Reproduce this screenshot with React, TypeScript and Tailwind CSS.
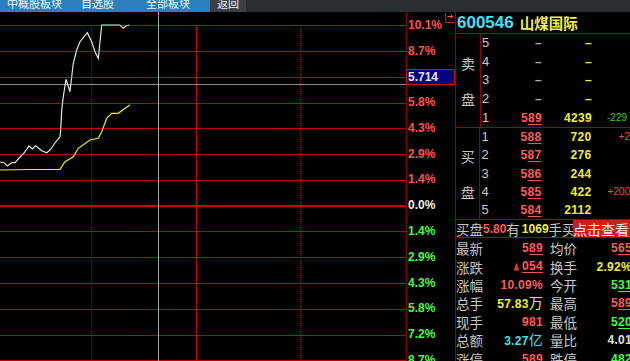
import React from 'react';

const num = "font-['Liberation_Sans',Arial,sans-serif]";
const cjk = "font-['Noto_Sans_CJK_SC',sans-serif]";

const gridY = [25, 51, 77, 103, 128, 154, 180, 231, 257, 283, 309, 335, 360];

const axisLabels = [
  { t: '10.1%', c: 'text-[#ff5050]' },
  { t: '8.7%', c: 'text-[#ff5050]' },
  { t: '7.2%', c: 'text-[#ff5050]' },
  { t: '5.8%', c: 'text-[#ff5050]' },
  { t: '4.3%', c: 'text-[#ff5050]' },
  { t: '2.9%', c: 'text-[#ff5050]' },
  { t: '1.4%', c: 'text-[#ff5050]' },
  { t: '0.0%', c: 'text-[#f0f0f0]' },
  { t: '1.4%', c: 'text-[#40ff40]' },
  { t: '2.9%', c: 'text-[#40ff40]' },
  { t: '4.3%', c: 'text-[#40ff40]' },
  { t: '5.8%', c: 'text-[#40ff40]' },
  { t: '7.2%', c: 'text-[#40ff40]' },
  { t: '8.7%', c: 'text-[#40ff40]' },
];

// price line and average line, page coordinates
const priceLine =
  '0,162 4,162.7 7.3,166 11.7,162.7 15,162.7 20,157 24,153 29,146 32.3,149 35.7,145.7 41.7,150.7 46.7,152.7 50,150 55,143 60,136.7 60.7,130 61.7,110 63.3,96.7 66,79.3 70,91.7 71.7,76.7 73.3,63.3 76.7,50 80,41.7 87.3,32.7 91.7,41.7 95,51.7 98.3,58.3 101.7,25 120,25 123.3,28.3 126,26 129.3,25';
const avgLine =
  '0,170 30,169.5 60,169.3 65,161.7 73.3,156.7 78.3,148.3 90,140 98.3,138.3 101.7,131.7 106.7,118.3 111.7,113.3 118.3,113.3 125,108.3 130,105';

type BookRow = { n: number; price?: string; vol?: string; chg?: string; chgCls?: string };

const sell: BookRow[] = [
  { n: 5 },
  { n: 4 },
  { n: 3 },
  { n: 2 },
  { n: 1, price: '589', vol: '4239', chg: '-229', chgCls: 'pl-[15px] text-[#30d030]' },
];

const buy: BookRow[] = [
  { n: 1, price: '588', vol: '720', chg: '+2', chgCls: 'pl-[27px] text-[#ff4040]' },
  { n: 2, price: '587', vol: '276' },
  { n: 3, price: '586', vol: '244' },
  { n: 4, price: '585', vol: '422', chg: '+200', chgCls: 'pl-[16px] text-[#ff4040]' },
  { n: 5, price: '584', vol: '2112' },
];

const Price = ({ v, color = 'decoration-[#ff5050]' }: { v: string; color?: string }) => (
  <span>
    {v.slice(0, v.length - 2)}
    <span className={`underline underline-offset-2 ${color}`}>{v.slice(-2)}</span>
  </span>
);

const Book = ({ side, rows, h }: { side: [string, string]; rows: BookRow[]; h: string }) => (
  <div className={`flex ${h} shrink-0 border-b border-[#9a0000]`}>
    <div className={`flex w-[25px] flex-col items-center justify-center gap-[18px] border-r border-[#9a0000] text-[14px] leading-[18px] text-[#c8c8c8] ${cjk}`}>
      <span>{side[0]}</span>
      <span>{side[1]}</span>
    </div>
    <div className="flex flex-1 flex-col">
      {rows.map((r) => (
        <div key={r.n} className={`flex min-h-0 flex-1 items-center whitespace-nowrap leading-[14px] ${num}`}>
          <span className="w-[10px] pl-[1px] text-[13px] text-[#c8c8c8]">{r.n}</span>
          <span className="w-[51px] text-right text-[12px] font-bold tracking-[0.3px] text-[#ff5a5a]">
            {r.price ? <Price v={r.price} /> : <span className="text-[#b0b0b0]">–</span>}
          </span>
          <span className="w-[50px] text-right text-[12px] font-bold tracking-[0.3px] text-[#f0f020]">
            {r.vol ?? '–'}
          </span>
          {r.chg && <span className={`text-[10px] ${r.chgCls}`}>{r.chg}</span>}
        </div>
      ))}
    </div>
  </div>
);

const stats: { l1: string; v1: React.ReactNode; l2: string; v2: React.ReactNode }[] = [
  {
    l1: '最新',
    v1: <span className="text-[#ff5a5a]"><Price v="589" /></span>,
    l2: '均价',
    v2: <span className="text-[#ff5a5a]"><Price v="565" /></span>,
  },
  {
    l1: '涨跌',
    v1: (
      <span className="inline-flex items-center text-[#ff5a5a]">
        <svg width="7" height="9" viewBox="0 0 7 9" className="mr-[2px]">
          <path d="M3.5 0.5 L6.5 8.5 H0.5 Z" fill="#e03030" />
        </svg>
        <span className="underline underline-offset-2 decoration-[#ff5050]">054</span>
      </span>
    ),
    l2: '换手',
    v2: <span className="text-[#f0f020]">2.92%</span>,
  },
  {
    l1: '涨幅',
    v1: <span className="text-[#ff5a5a]">10.09%</span>,
    l2: '今开',
    v2: <span className="text-[#40ff40]"><Price v="531" color="decoration-[#40ff40]" /></span>,
  },
  {
    l1: '总手',
    v1: (
      <span className="text-[#f0f020]">
        57.83<span className={`text-[14px] font-normal ${cjk}`}>万</span>
      </span>
    ),
    l2: '最高',
    v2: <span className="text-[#ff5a5a]"><Price v="589" /></span>,
  },
  {
    l1: '现手',
    v1: <span className="text-[#ff5a5a]">981</span>,
    l2: '最低',
    v2: <span className="text-[#40ff40]"><Price v="520" color="decoration-[#40ff40]" /></span>,
  },
  {
    l1: '总额',
    v1: (
      <span className="text-[#40e0f0]">
        3.27<span className={`text-[14px] font-normal ${cjk}`}>亿</span>
      </span>
    ),
    l2: '量比',
    v2: <span className="text-[#e0e0e0]">4.01</span>,
  },
  {
    l1: '涨停',
    v1: <span className="text-[#ff5a5a]"><Price v="589" /></span>,
    l2: '跌停',
    v2: <span className="text-[#40ff40]"><Price v="482" color="decoration-[#40ff40]" /></span>,
  },
];

const tabs = [
  { t: '中概股板块', cls: 'pl-[7px] w-[81px]' },
  { t: '自选股', cls: 'w-[65px]' },
  { t: '全部板块', cls: 'w-[57px]' },
];

export default function App() {
  return (
    <div className={`flex h-[361px] w-[630px] flex-col overflow-hidden bg-black ${num}`}>
      {/* top tab strip, cut off */}
      <div className={`flex h-[12px] shrink-0 overflow-hidden text-[11px] leading-[11px] text-[#eef4fa] ${cjk}`}>
        <div className="flex w-[210px] bg-[#2b7fbf]">
          {tabs.map((t) => (
            <span key={t.t} className={`-mt-[2px] ${t.cls}`}>{t.t}</span>
          ))}
        </div>
        <div className="w-[36px] bg-[#3c4045] pl-[7px]">
          <span className="-mt-[2px] block">返回</span>
        </div>
        <div className="flex-1 bg-[#2a2d32]" />
      </div>

      <div className="flex flex-1">
        {/* intraday chart */}
        <div className="w-[407px] border-r border-[#8a0000]">
          <svg width="406" height="349" viewBox="0 12 406 349" className="block">
            {gridY.map((y) => (
              <line key={y} x1="0" x2="406" y1={y + 0.5} y2={y + 0.5} stroke="#c00000" strokeWidth="1" />
            ))}
            <line x1="0" x2="406" y1="206" y2="206" stroke="#d00000" strokeWidth="2" />
            <line x1="91.5" x2="91.5" y1="25" y2="361" stroke="#b00000" strokeWidth="1" strokeDasharray="1 1" />
            <line x1="300.5" x2="300.5" y1="25" y2="361" stroke="#b00000" strokeWidth="1" strokeDasharray="1 1" />
            <line x1="196.5" x2="196.5" y1="25" y2="361" stroke="#d00000" strokeWidth="1" />
            <line x1="0" x2="406" y1="84.5" y2="84.5" stroke="#8a8a8a" strokeWidth="1" />
            <line x1="158.5" x2="158.5" y1="12" y2="361" stroke="#a8a8a8" strokeWidth="1" />
            <polyline points={avgLine} fill="none" stroke="#f0f000" strokeWidth="1.2" />
            <polyline points={priceLine} fill="none" stroke="#e4e4e4" strokeWidth="1.2" />
          </svg>
        </div>

        {/* percent axis */}
        <div className="relative w-[48px]">
          <div className="flex flex-col pl-[1px]">
            {axisLabels.map((a, i) => (
              <div key={i} className={`flex h-[25.77px] items-center text-[12px] font-bold ${a.c}`}>
                {a.t}
              </div>
            ))}
          </div>
          <svg width="9" height="10" viewBox="0 0 9 10" className="absolute right-[1px] top-[1px]">
            <path d="M0.5 0 V9.5 H9" fill="none" stroke="#d02020" />
            <path d="M2.5 3.5 H7.5 M5.5 1.5 L7.5 3.5 L5.5 5.5" fill="none" stroke="#f06060" />
          </svg>
          <div className="absolute -left-[1px] top-[57px] flex h-[16px] w-[49px] items-center border border-[#d01010] bg-[#000080] pl-[1px] text-[12px] font-bold text-[#e8e8ff]">
            5.714
          </div>
        </div>

        {/* quote panel */}
        <div className="flex w-[175px] flex-col overflow-hidden border-l border-[#9a0000]">
          <div className="flex h-[22px] shrink-0 items-center whitespace-nowrap border-b border-[#9a0000] pl-[1px]">
            <span className="text-[17px] font-bold text-[#40e0f8]">600546</span>
            <span className={`ml-[6px] text-[14.5px] font-bold text-[#f0f040] ${cjk}`}>山煤国际</span>
          </div>

          <Book side={['卖', '盘']} rows={sell} h="h-[94px]" />
          <Book side={['买', '盘']} rows={buy} h="h-[92px]" />

          <div className="flex h-[18px] shrink-0 items-center whitespace-nowrap border-b border-[#9a0000] leading-[16px]">
            <div className={`flex min-w-0 flex-1 items-center overflow-hidden text-[13.5px] text-[#c8c8c8] ${cjk}`}>
              <span>买盘</span>
              <span className={`text-[12px] font-bold text-[#ff5a5a] ${num}`}>5.80</span>
              <span>有</span>
              <span className={`ml-[2px] text-[12px] font-bold text-[#f0f020] ${num}`}>1069</span>
              <span>手买</span>
            </div>
            <div className={`flex h-full w-[57px] shrink-0 items-center bg-[#d41a1a] text-[14px] text-[#fff0f0] ${cjk}`}>
              点击查看
            </div>
          </div>

          <div className="flex flex-1 flex-col pt-[1px]">
            {stats.map((s) => (
              <div key={s.l1} className="flex h-[18.4px] shrink-0 items-center whitespace-nowrap leading-[16px]">
                <span className={`w-[27px] shrink-0 text-[13.5px] text-[#c8c8c8] ${cjk}`}>{s.l1}</span>
                <span className="w-[60px] shrink-0 text-right text-[12px] font-bold tracking-[0.3px]">{s.v1}</span>
                <span className={`w-[34px] shrink-0 pl-[7px] text-[13.5px] text-[#c8c8c8] ${cjk}`}>{s.l2}</span>
                <span className="w-[55px] shrink-0 text-right text-[12px] font-bold tracking-[0.3px]">{s.v2}</span>
              </div>
            ))}
          </div>
        </div>
      </div>
    </div>
  );
}
